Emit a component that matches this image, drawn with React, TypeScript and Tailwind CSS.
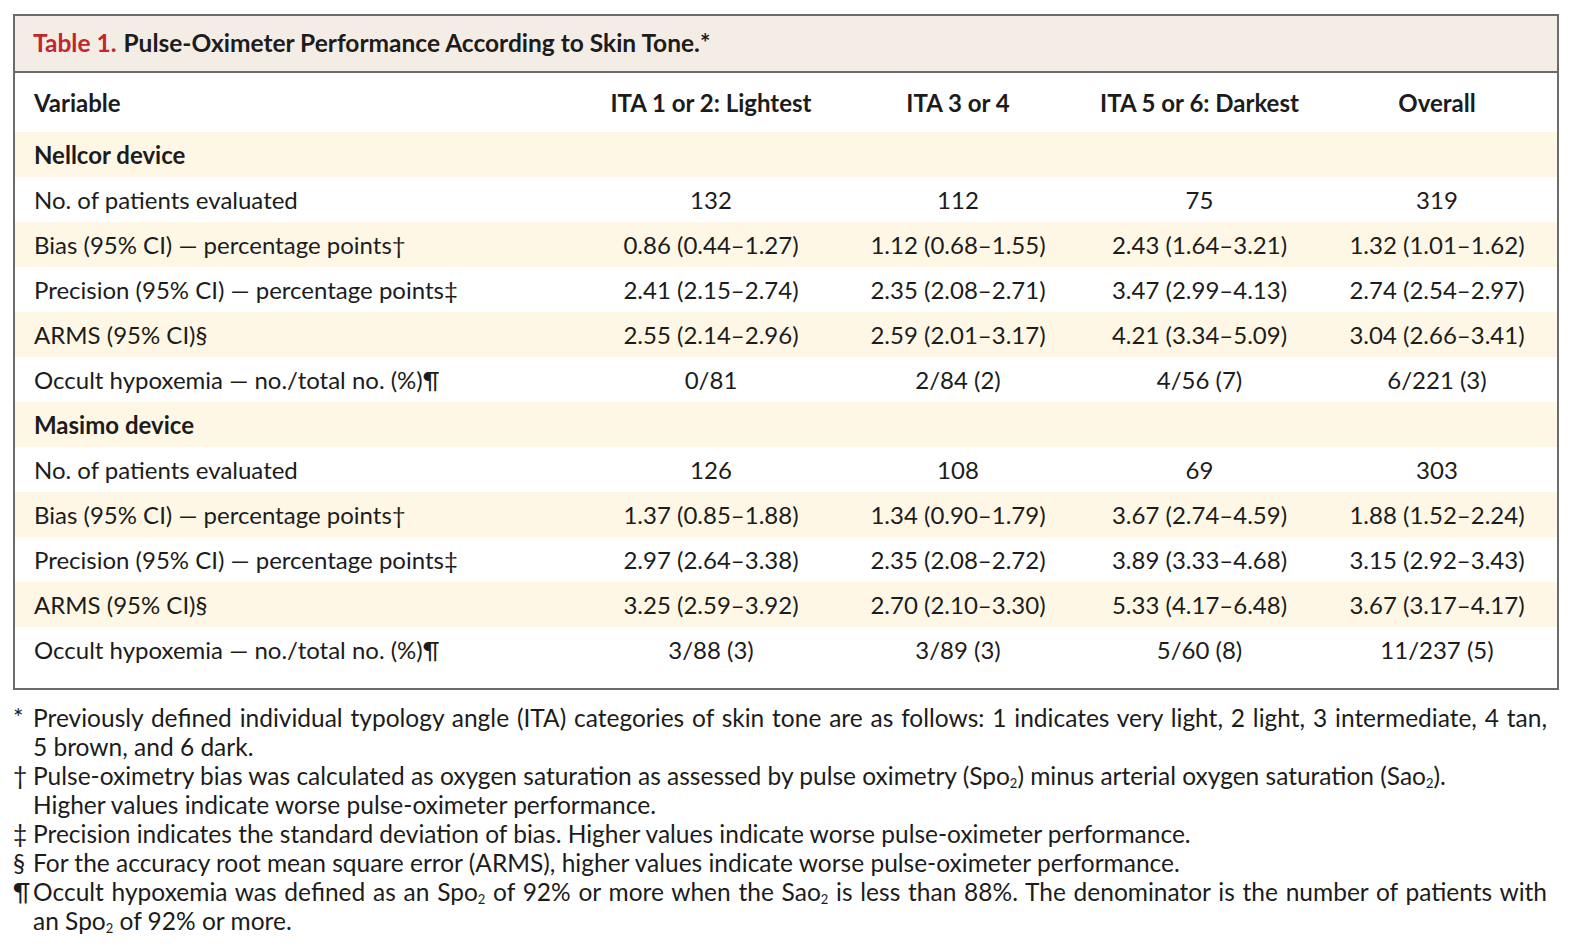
import React from 'react';

const cols = 'grid grid-cols-[573px_246px_248px_235px_240px] items-center';

type RowData = { label: React.ReactNode; values: string[] };

function Sub({ children }: { children: React.ReactNode }) {
    return <sub className="text-[13px] relative top-[3px]">{children}</sub>;
}

function SectionRow({ title, shaded }: { title: string; shaded?: boolean }) {
    return (
        <div className={`${cols} h-[45px] ${shaded ? 'bg-[#fef7e6]' : ''}`}>
            <div className="pl-[19px] font-bold">{title}</div>
        </div>
    );
}

function DataRow({ row, shaded }: { row: RowData; shaded: boolean }) {
    return (
        <div className={`${cols} h-[45px] ${shaded ? 'bg-[#fef7e6]' : ''}`}>
            <div className="pl-[19px]">{row.label}</div>
            {row.values.map((v, i) => (
                <div key={i} className="text-center">{v}</div>
            ))}
        </div>
    );
}

const nellcor: RowData[] = [
    { label: 'No. of patients evaluated', values: ['132', '112', '75', '319'] },
    { label: 'Bias (95% CI) — percentage points†', values: ['0.86 (0.44–1.27)', '1.12 (0.68–1.55)', '2.43 (1.64–3.21)', '1.32 (1.01–1.62)'] },
    { label: 'Precision (95% CI) — percentage points‡', values: ['2.41 (2.15–2.74)', '2.35 (2.08–2.71)', '3.47 (2.99–4.13)', '2.74 (2.54–2.97)'] },
    { label: 'ARMS (95% CI)§', values: ['2.55 (2.14–2.96)', '2.59 (2.01–3.17)', '4.21 (3.34–5.09)', '3.04 (2.66–3.41)'] },
    { label: 'Occult hypoxemia — no./total no. (%)¶', values: ['0/81', '2/84 (2)', '4/56 (7)', '6/221 (3)'] },
];

const masimo: RowData[] = [
    { label: 'No. of patients evaluated', values: ['126', '108', '69', '303'] },
    { label: 'Bias (95% CI) — percentage points†', values: ['1.37 (0.85–1.88)', '1.34 (0.90–1.79)', '3.67 (2.74–4.59)', '1.88 (1.52–2.24)'] },
    { label: 'Precision (95% CI) — percentage points‡', values: ['2.97 (2.64–3.38)', '2.35 (2.08–2.72)', '3.89 (3.33–4.68)', '3.15 (2.92–3.43)'] },
    { label: 'ARMS (95% CI)§', values: ['3.25 (2.59–3.92)', '2.70 (2.10–3.30)', '5.33 (4.17–6.48)', '3.67 (3.17–4.17)'] },
    { label: 'Occult hypoxemia — no./total no. (%)¶', values: ['3/88 (3)', '3/89 (3)', '5/60 (8)', '11/237 (5)'] },
];

function Footnote({ mark, children }: { mark: string; children: React.ReactNode }) {
    return (
        <div className="flex whitespace-nowrap">
            <span className="w-[20px] shrink-0">{mark}</span>
            <div>{children}</div>
        </div>
    );
}

// eerste regel uitvullen tot de rechterkant
function FullLine({ children }: { children: React.ReactNode }) {
    return <div className="w-[1514px] whitespace-normal text-justify [text-align-last:justify]">{children}</div>;
}

export default function App() {
    return (
        <div className="w-[1572px] h-[950px] bg-white text-[#1c1c1c] text-[24px] font-['Lato',sans-serif] pt-[14px] pl-[13px]">
            <div className="w-[1546px] border-2 border-[#6b6b6b]">
                {/* titel */}
                <div className="h-[57px] bg-[#f4ede6] border-b-2 border-[#6b6b6b] flex items-center pl-[18px] font-bold text-[24.5px]">
                    <span className="text-[#c1272d] mr-[7px]">Table 1.</span>
                    <span>Pulse-Oximeter Performance According to Skin Tone.*</span>
                </div>
                <div className={`${cols} h-[59px] font-bold`}>
                    <div className="pl-[19px]">Variable</div>
                    <div className="text-center">ITA 1 or 2: Lightest</div>
                    <div className="text-center">ITA 3 or 4</div>
                    <div className="text-center">ITA 5 or 6: Darkest</div>
                    <div className="text-center">Overall</div>
                </div>
                <SectionRow title="Nellcor device" shaded />
                {nellcor.map((r, i) => <DataRow key={'n' + i} row={r} shaded={i % 2 === 1} />)}
                <SectionRow title="Masimo device" shaded />
                {masimo.map((r, i) => <DataRow key={'m' + i} row={r} shaded={i % 2 === 1} />)}
                <div className="h-[16px]" />
            </div>
            <div className="mt-[13px] leading-[29px] text-[24.5px]">
                <Footnote mark="*">
                    <FullLine>Previously defined individual typology angle (ITA) categories of skin tone are as follows: 1 indicates very light, 2 light, 3 intermediate, 4 tan,</FullLine>
                    <div>5 brown, and 6 dark.</div>
                </Footnote>
                <Footnote mark="†">
                    <div>Pulse-oximetry bias was calculated as oxygen saturation as assessed by pulse oximetry (Spo<Sub>2</Sub>) minus arterial oxygen saturation (Sao<Sub>2</Sub>).</div>
                    <div>Higher values indicate worse pulse-oximeter performance.</div>
                </Footnote>
                <Footnote mark="‡">Precision indicates the standard deviation of bias. Higher values indicate worse pulse-oximeter performance.</Footnote>
                <Footnote mark="§">For the accuracy root mean square error (ARMS), higher values indicate worse pulse-oximeter performance.</Footnote>
                <Footnote mark="¶">
                    <FullLine>Occult hypoxemia was defined as an Spo<Sub>2</Sub> of 92% or more when the Sao<Sub>2</Sub> is less than 88%. The denominator is the number of patients with</FullLine>
                    <div>an Spo<Sub>2</Sub> of 92% or more.</div>
                </Footnote>
            </div>
        </div>
    );
}
